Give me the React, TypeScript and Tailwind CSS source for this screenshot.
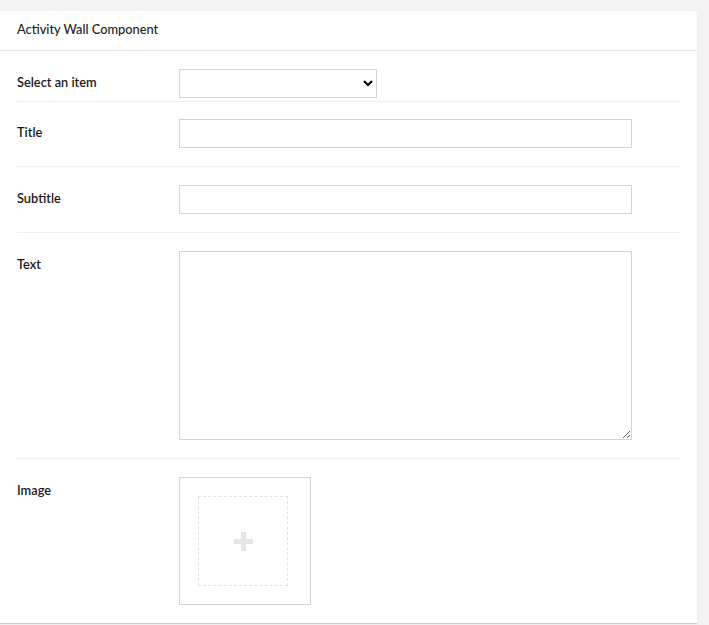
export default function App() {
  const label = "w-[162px] shrink-0 pt-[5px] text-[12.8px] leading-[16px] font-semibold text-[#1a1a1a]";
  const field = "h-[29px] border border-[#d4d4d4] bg-white outline-none";

  return (
    <div className="min-h-[625px] bg-[#f4f2f3] pt-[11px] font-['Lato','Liberation_Sans',sans-serif]">
      <div className="w-[697px] rounded-tr-[3px] bg-white shadow-[0_1px_1px_rgba(0,0,0,0.18)]">
        <div className="flex h-[40px] items-center border-b border-[#e6e6e6] px-[17px] pb-[1px] text-[12.8px] font-medium text-[#222]">
          Activity Wall Component
        </div>

        <div className="px-[17px]">
          <div className="flex border-b border-[#f0f0f0] pt-[18px] pb-[3px]">
            <div className={label}>Select an item</div>
            <select className={`${field} w-[198px] text-[13px]`} defaultValue="">
              <option value=""></option>
            </select>
          </div>

          <div className="flex border-b border-[#f0f0f0] pt-[17px] pb-[18px]">
            <div className={label}>Title</div>
            <input type="text" className={`${field} w-[453px]`} />
          </div>

          <div className="flex border-b border-[#f0f0f0] pt-[18px] pb-[18px]">
            <div className={label}>Subtitle</div>
            <input type="text" className={`${field} w-[453px]`} />
          </div>

          <div className="flex border-b border-[#f0f0f0] pt-[18px] pb-[18px]">
            <div className={label}>Text</div>
            <textarea className="block h-[189px] w-[453px] border border-[#d4d4d4] bg-white outline-none" />
          </div>

          <div className="flex pt-[18px] pb-[18px]">
            <div className={label}>Image</div>
            <div className="h-[128px] w-[132px] border border-[#d4d4d4] pl-[18px] pt-[18px]">
              <div className="flex h-[90px] w-[90px] items-center justify-center border border-dashed border-[#e2e2e2]">
                <svg width="19" height="19" viewBox="0 0 19 19">
                  <rect x="7" y="0" width="5" height="19" fill="#e6e6e8" />
                  <rect x="0" y="7" width="19" height="5" fill="#e6e6e8" />
                </svg>
              </div>
            </div>
          </div>
        </div>
      </div>
    </div>
  );
}
